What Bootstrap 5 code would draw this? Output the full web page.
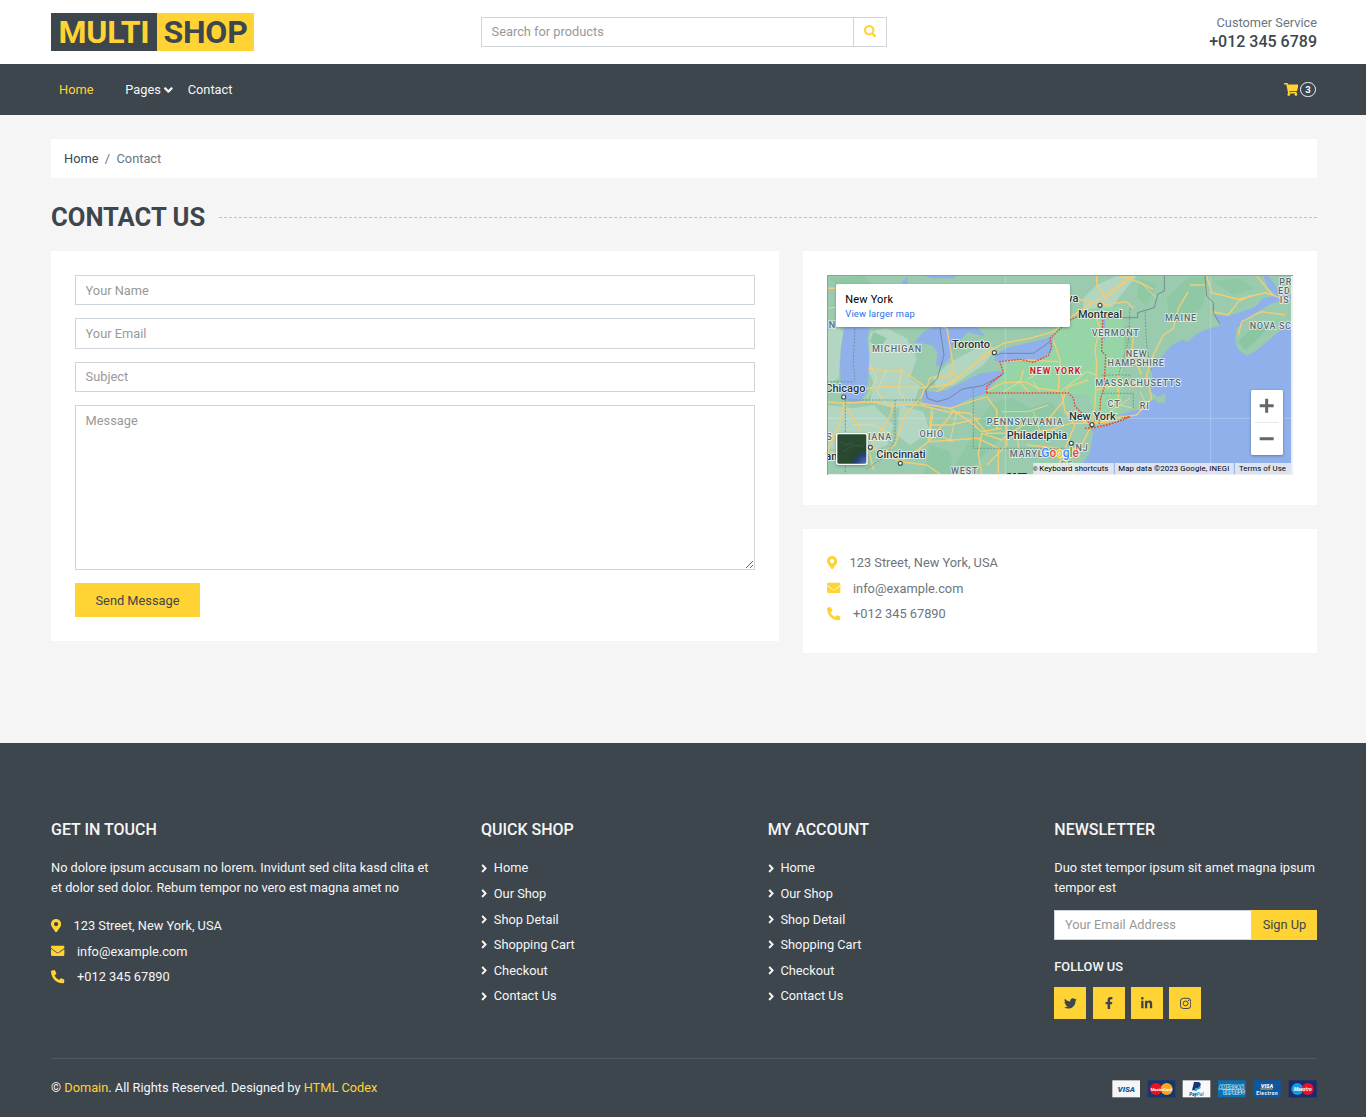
<!DOCTYPE html>
<html lang="en">
<head>
<meta charset="utf-8">
<meta name="viewport" content="width=device-width, initial-scale=1">
<title>MultiShop - Contact</title>
<link href="https://cdn.jsdelivr.net/npm/bootstrap@5.3.0/dist/css/bootstrap.min.css" rel="stylesheet">
<style>
html{font-size:12.8px;background:#fff}
body{width:1366px;font-family:Roboto,"Liberation Sans",sans-serif;font-size:12.8px;line-height:1.5;color:#6c757d;background:#f5f5f5;--gold:#ffd333;--ink:#3d464d}
a{text-decoration:none}
.row{--bs-gutter-x:24px}
.shell{padding-left:51px;padding-right:49px}
.ink-bg{background:var(--ink)}
.gold-bg{background:var(--gold)}
.ink{color:var(--ink)}
.gold{color:var(--gold)}
.pale{color:#f5f5f5}
.ico{height:1em;width:auto;fill:currentColor;display:inline-block;vertical-align:-.125em;flex:none}
.brand span{font-size:32px;line-height:38.4px;font-weight:700;display:block;text-align:center;white-space:nowrap;letter-spacing:-.2px}
.brand span:first-child{width:106px}
.brand span:last-child{width:97px}
.topbar{height:64px}
#tel{font-size:16px;line-height:19.2px;font-weight:500}
.form-control{border-radius:0;border:1px solid #ced4da;padding:4.8px 9.6px;font-size:12.8px;line-height:19.2px;height:30.4px;background:#fff}
.form-control::placeholder{color:#999;opacity:1}
.find-btn{border:1px solid #ced4da;border-left:0;width:33px;background:#fff;color:var(--gold);padding-bottom:2px}
.mainnav{height:51px;font-size:12.8px}
#menu{padding-left:8px}
#menu a:nth-child(1){margin-right:31.8px}
#menu a:nth-child(2){margin-right:15px}
#menu .ico{margin-left:0;height:14px}
.crumbs{height:39px;padding:0 13px;margin-top:24px}
.crumbs .sep{padding:0 6.4px}
.page-title{font-size:25.6px;line-height:30.8px;font-weight:700;margin:24px 0 18.2px}
.dashes{height:1px;margin-left:14px;background:repeating-linear-gradient(90deg,#c4c4c4 0 3px,transparent 3px 5px)}
.panel{background:#fff;padding:24px}
.stack{display:flex;flex-direction:column;gap:13px}
textarea.form-control{height:165px;min-height:165px;resize:vertical}
.gbtn{background:var(--gold);color:var(--ink);border:0;border-radius:0;font-size:12.8px;line-height:19.2px}
.lines>p{margin:0 0 6.4px;display:flex;align-items:center;line-height:19.2px}
.lines .ico{height:13.6px;margin-right:12.4px}
.mapbox{height:200px;width:466px;display:block;font-family:Roboto,sans-serif}
#colForm{flex:0 0 752px;max-width:752px}
#colInfo{flex:0 0 538px;max-width:538px}
#send{width:125px;height:34px}
#mapPanel{height:254px}
#infoPanel{height:124px;margin-top:24px}
footer{margin-top:90px;padding-top:77px;height:374px}
footer h5{font-size:16px;line-height:19.2px;font-weight:500;margin:0 0 19.2px;text-transform:uppercase}
footer h6{font-size:12.8px;line-height:15.4px;font-weight:500;margin:19.2px 0 12.4px}
.qlinks a{display:flex;align-items:center;margin-bottom:6.4px;line-height:19.2px;color:#f5f5f5}
.qlinks .ico{margin-right:6.4px}
.sq{width:32px;height:32px;margin-right:6.3px;display:flex;align-items:center;justify-content:center}
.fbottom{margin:0 49px 0 51px;border-top:1px solid rgba(255,255,255,.1);padding-top:19px}
.count{width:16px;height:15px;border:1px solid #f5f5f5;border-radius:8px;font-size:9.6px;font-weight:700;line-height:13px;text-align:center;margin:0 1px 0 2px}
#frow{height:238px}
#blurb{margin:0 -10px 19.2px 0;padding-right:32px}
#news{margin:0 -6px 12.8px 0}
#sign{width:65px;flex:none}
#pay{width:205px;height:18px;margin-top:2px;flex:none}
</style>
<script src="https://cdn.jsdelivr.net/npm/bootstrap@5.3.0/dist/js/bootstrap.bundle.min.js"></script>
</head>
<body>
<svg width="0" height="0" class="d-none" aria-hidden="true">
<symbol id="i-pin" viewBox="0 0 384 512"><path d="M172.268 501.67C26.97 291.031 0 269.413 0 192 0 85.961 85.961 0 192 0s192 85.961 192 192c0 77.413-26.97 99.031-172.268 309.67-9.535 13.774-29.93 13.773-39.464 0zM192 272c44.183 0 80-35.817 80-80s-35.817-80-80-80-80 35.817-80 80 35.817 80 80 80z"/></symbol>
<symbol id="i-mail" viewBox="0 0 512 512"><path d="M502.3 190.8c3.9-3.1 9.7-.2 9.7 4.7V400c0 26.5-21.5 48-48 48H48c-26.5 0-48-21.5-48-48V195.6c0-5 5.7-7.8 9.7-4.7 22.4 17.4 52.1 39.5 154.1 113.6 21.1 15.4 56.7 47.8 92.2 47.6 35.7.3 72-32.8 92.3-47.6 102-74.1 131.6-96.3 154-113.7zM256 320c23.2.4 56.6-29.2 73.4-41.4 132.7-96.3 142.8-104.7 173.4-128.7 5.8-4.5 9.2-11.5 9.2-18.9v-19c0-26.5-21.5-48-48-48H48c-26.5 0-48 21.5-48 48v19c0 7.4 3.4 14.3 9.2 18.9 30.6 23.9 40.7 32.4 173.4 128.7 16.8 12.2 50.2 41.8 73.4 41.4z"/></symbol>
<symbol id="i-phone" viewBox="0 0 512 512"><path d="M497.39 361.8l-112-48a24 24 0 0 0-28 6.9l-49.6 60.6A370.66 370.66 0 0 1 130.6 204.11l60.6-49.6a23.94 23.94 0 0 0 6.9-28l-48-112A24.16 24.16 0 0 0 122.6.61l-104 24A24 24 0 0 0 0 48c0 256.5 207.9 464 464 464a24 24 0 0 0 23.4-18.6l24-104a24.29 24.29 0 0 0-14.01-27.6z"/></symbol>
<symbol id="i-right" viewBox="0 0 256 512"><path d="M224.3 273l-136 136c-9.4 9.4-24.6 9.4-33.9 0l-22.6-22.6c-9.4-9.4-9.4-24.6 0-33.9l96.4-96.4-96.4-96.4c-9.4-9.4-9.4-24.6 0-33.9L54.3 103c9.4-9.4 24.6-9.4 33.9 0l136 136c9.5 9.4 9.5 24.6.1 34z"/></symbol>
</svg>

<header class="topbar bg-white shell">
  <div class="row h-100 align-items-center">
    <div class="col-4">
      <a href="#" class="brand d-flex"><span class="ink-bg gold">MULTI</span><span class="gold-bg ink">SHOP</span></a>
    </div>
    <div class="col-4 d-flex">
      <input class="form-control flex-fill w-auto" placeholder="Search for products">
      <div class="find-btn d-flex align-items-center justify-content-center"><svg class="ico" viewBox="0 0 512 512"><path d="M505 442.7L405.3 343c-4.5-4.5-10.6-7-17-7H372c27.6-35.3 44-79.7 44-128C416 93.1 322.9 0 208 0S0 93.1 0 208s93.1 208 208 208c48.3 0 92.7-16.4 128-44v16.3c0 6.4 2.5 12.5 7 17l99.7 99.7c9.4 9.4 24.6 9.4 33.9 0l28.3-28.3c9.4-9.4 9.4-24.6.1-34zM208 336c-70.7 0-128-57.2-128-128 0-70.7 57.2-128 128-128 70.7 0 128 57.2 128 128 0 70.7-57.2 128-128 128z"/></svg></div>
    </div>
    <div class="col-4 text-end">
      <p class="m-0">Customer Service</p>
      <h5 class="m-0 ink" id="tel">+012 345 6789</h5>
    </div>
  </div>
</header>

<nav class="mainnav ink-bg shell d-flex align-items-center justify-content-between pale">
  <div class="d-flex align-items-center" id="menu">
    <a href="#" class="gold">Home</a>
    <a href="#" class="pale d-flex align-items-center"><span class="me-1">Pages</span><svg class="ico" viewBox="0 0 320 512"><path d="M143 352.3L7 216.3c-9.4-9.4-9.4-24.6 0-33.9l22.6-22.6c9.4-9.4 24.6-9.4 33.9 0l96.4 96.4 96.4-96.4c9.4-9.4 24.6-9.4 33.9 0l22.6 22.6c9.4 9.4 9.4 24.6 0 33.9l-136 136c-9.2 9.4-24.4 9.4-33.8 0z"/></svg></a>
    <a href="#" class="pale">Contact</a>
  </div>
  <div class="d-flex align-items-center">
    <svg class="ico gold" viewBox="0 0 576 512"><path d="M528.12 301.319l47.273-208C578.806 78.301 567.391 64 551.99 64H159.208l-9.166-44.81C147.758 8.021 137.93 0 126.529 0H24C10.745 0 0 10.745 0 24v16c0 13.255 10.745 24 24 24h69.883l70.248 343.435C147.325 417.1 136 435.222 136 456c0 30.928 25.072 56 56 56s56-25.072 56-56c0-15.674-6.447-29.835-16.824-40h209.647C430.447 426.165 424 440.326 424 456c0 30.928 25.072 56 56 56s56-25.072 56-56c0-22.172-12.888-41.332-31.579-50.405l5.517-24.276c3.413-15.018-8.002-29.319-23.403-29.319H218.117l-6.545-32h293.145c11.206 0 20.92-7.754 23.403-18.681z"/></svg>
    <span class="count">3</span>
  </div>
</nav>

<main class="shell">
  <div class="crumbs bg-white d-flex align-items-center"><a href="#" class="ink">Home</a><span class="sep">/</span><span>Contact</span></div>
  <h2 class="page-title ink d-flex align-items-center">CONTACT US<span class="dashes flex-fill"></span></h2>
  <div class="row align-items-start">
    <div class="col-7" id="colForm">
      <form class="panel stack">
        <input class="form-control" placeholder="Your Name">
        <input class="form-control" placeholder="Your Email">
        <input class="form-control" placeholder="Subject">
        <textarea class="form-control" placeholder="Message"></textarea>
        <div class="d-flex"><button type="button" class="gbtn" id="send">Send Message</button></div>
      </form>
    </div>
    <div class="col-5" id="colInfo">
      <div class="panel" id="mapPanel">
<svg class="mapbox" viewBox="21 30 1398 600">
<defs>
<radialGradient id="sat" cx=".95" cy="1" r=".9"><stop offset="0" stop-color="#5675b8"/><stop offset=".35" stop-color="#26407a"/><stop offset=".5" stop-color="#27472f"/><stop offset="1" stop-color="#2b4a30"/></radialGradient>
<clipPath id="mc"><rect x="21" y="30" width="1392" height="597"/></clipPath>
<filter id="sh" x="-20%" y="-20%" width="140%" height="150%"><feDropShadow dx="0" dy="3" stdDeviation="4" flood-opacity=".3"/></filter>
</defs>
<rect x="21" y="30" width="1398" height="600" fill="#eee"/>
<g clip-path="url(#mc)">
<rect x="21" y="30" width="1392" height="597" fill="#9acbae"/>
<!-- farmland tints -->
<g fill="#b2d6c1">
<path d="M150 200l50-10 60 30 30 60-20 60 30 20-20 60-60 10-70-20 10-60-20-40z"/>
<path d="M380 300l50-30 60-30 40 10-40 50-90 60-50 10-10-30z"/>
<path d="M21 420l80 10 60-10 60 60-20 60-70 30-110-20z"/>
<path d="M240 420l70 20 20 60-60 40-40-30z"/>
<path d="M790 100l40-40 60-27h60l-50 60-40 60-70 0z"/>
<path d="M21 200l30-20 20 20-10 60-5 80-35 20z"/>
</g>
<g fill="#8fc8a4">
<path d="M480 460l40-50 60-10 50 30 60-20 40 40-80 50-100 10-50 50-50 60h-60l40-60z"/>
<path d="M870 200l60-20 10 60-30 90-50 10z"/><path d="M1040 100l60-60 60-7-10 90-50 40-50 10z"/>
<path d="M330 540l60 20 10 67h-90z"/><path d="M30 40l100-7 30 30-110 0z"/>
<path d="M160 200l40 20-20 30-30-20zM1180 50l80-10 40 30-60 20zM960 40l50 20-30 60-30-20z"/>
</g>
<!-- New York state -->
<path fill="#96d5a5" d="M500 384l50-56-10-38 60-10 40 10 50-25-5-45 60-55 70-35 93-5 5 100-5 180-15 72-50-20-30-40-10-28z"/>
<!-- lakes -->
<g fill="#8fb0ea">
<path d="M75 180l75 0-8 40 6 50-2 60-6 50-18 28-22 8-25-16-13-50-2-50 4-60z"/>
<path d="M310 200l35-16h125l25 30-50-12-45 38-8 35-27 30-17-5 4-40-17-20-50-8z"/>
<path d="M303 400l12-25q25 12 65 0l50-25 50-25 65-7 5 10-35 32-15 25-60 20-40 20-50 7-35-12z"/>
<path d="M535 265l25-17 60-13 80-20-8 45-32 28-60 2-50 5-30-10z"/>
<path d="M245 50l18-15v20l-10 6zM310 32h100l-10 8h-60zM848 160l8 0-2 70-6-20z"/>
</g>
<!-- Atlantic coast -->
<g transform="translate(705 0)">
<path fill="#8fb0ea" d="M60 630L80 598 104 565 115 500 100 492 130 488 225 458 180 452 235 437 262 432 285 410 300 402 308 415 330 412 332 385 308 396 285 378 292 350 290 310 320 275 350 240 382 225 400 230 420 210 450 195 500 180 475 150 520 152 560 140 600 125 625 100 665 90 640 70 625 33H720V630Z"/>
<path fill="#9acbae" d="M100 490l40-28 60-12 28 8-60 20-55 14z"/>
<path fill="#9acbae" d="M540 225l5-35 35-30 40-10 45-22 44-3v45l-49 40-60 50-25 12-25-17zM640 33l30 40 39 20V33z"/>
<path fill="#9acbae" d="M590 150l60-35 65-15v30l-65 30z"/>
<path fill="#8ac6a2" d="M550 230l40-40 60-20-30 40-50 45z"/>
</g>
<path d="M556 30v597M1172 30v597M21 460h1392" stroke="#fff" stroke-opacity=".35" stroke-width="2" fill="none"/>
<!-- highways -->
<g fill="none" stroke="#f0cd76" stroke-width="4.4" stroke-linejoin="round">
<path d="M21 410l50 5 75-5 80 10 75 0 80 20 70 5 50 60 110 0 80-10 60-20 60 0 60-5"/>
<path d="M21 70l60 0 40 30 60 30 60-10 60 40 80 30 20 120-20 30"/>
<path d="M145 310l60 10 40-5 70 50-10 30-50 55-30 90-60 40"/>
<path d="M140 370l60-5 120 3 60-10 60-40 60-55 50-28 80-15 70-20 60-50 50-30 90-60 40-40"/>
<path d="M350 380l50-30 60-50 60-40M320 368l10-30 80-10"/>
<path d="M71 415l-10 60-30 60-10 40M71 415l40 60 30 60 20 80M150 545l-60-10-69-20M150 545l90 45 60-40 25-20 10-100M150 545l60-90 10-35M325 530l150-10 60 30 0 75M240 590l80 10 40 27M325 530l60-70 15-25"/>
<path d="M300 415l90 15 60 40 35 30 60-10M390 430l110-35M545 290l10 0 70-5 90 5M500 395l30 40 0 60M610 313l-10 40 30 30M500 378l50-25 65-3 40 20 60 8"/>
<path d="M485 505l-10 60 10 62M485 505l60 20 70-50 60 0 50-60 20-50 60-20M725 380l10 60 30 40-30 70-30 77M735 440l80 40-30 60-60 30M700 225l20 60-5 95"/>
<path d="M815 480l10-60 5-120-5-50 15-60-10-30"/>
<path d="M840 120l40-40 60-47M840 120l80-10 20 20M860 100l-30-40 0-27M900 33l60 20 40 20M640 120l90-30 110 30"/>
<path d="M815 480l60-20 75-10 45-50-15-70 20-60 30-60 30-20 15-60 30-50M965 330l-30-70 5-50M895 330l0 70M830 375l60-15 80 5"/>
<path d="M1160 33l15 50 80 20 80-20 60 20M1175 140l50 10 30-40 40-20M1255 210l10-40 60-30 70 10M1310 33l50 60M1110 60h45"/>
<path d="M330 480l60 0 90-20M620 540l100 10 30 77M560 480l0 60-60 60M21 560l80 0 40-15"/>
</g>
<g fill="none" stroke="#f3d88e" stroke-width="2.6">
<path d="M21 130l80-10 60-60M150 300l20 40-30 60M200 318l-30 60 30 40M245 315l-10 60 20 30M100 480l60 0 60 30M340 440l-10 60 70 30M410 440l-20 90M545 440l80 0 60-20M640 440l20 60 60 10M590 500l10 80M620 345l25-15M660 380l-20-30M960 50l50 50M960 380l20 40M900 420l40 10M870 440l60-40M720 380l80-60 30 10M600 350l-50 30"/>
</g>
<!-- borders -->
<g fill="none" stroke="#6f8f86" stroke-width="2.5" stroke-dasharray="6 4">
<path d="M105 190l-5 100 5 60M21 350h82M76 405v222M76 405h225M225 405v120l-30 50-60 40M460 370v180h280M845 330h90M850 385h90v50M975 140l5 100 15 80M930 130l-5 100-30 100"/>
</g>
<g fill="none" stroke="#6d7f8a" stroke-width="2.5">
<path d="M360 190l12 80-20 70-35 35 5 25 30 10 35-10 40-28 60-10 60-32M530 270l15-5h95l50-35M848 158h105v-15l50-15 10-40 20-10v-45M1155 33l5 60 20 20 0 30 20 35"/>
</g>
<path fill="none" stroke="#ea4335" stroke-width="4" stroke-dasharray="5 4" d="M500 384h245l15 15 5 25 30 30 20 35M500 384v-20l50-40-10-34 60-7 40 9 45-20 10-25-5-27 60-55 45-20M848 165l-3 95 12 10-5 100-10 30-5 80M805 490l60-10 65-25M795 490l30-2 70-18 35-14-25 2"/>
<!-- place names -->
<g text-anchor="middle">
<g font-size="27" font-weight="500" fill="#5a6872" stroke="#fff" stroke-opacity=".75" stroke-width="5" paint-order="stroke" letter-spacing="2.4">
<text x="231" y="260">MICHIGAN</text><text x="335" y="517">OHIO</text><text x="180" y="525">IANA</text><text x="37" y="190">N</text><text x="28" y="525">S</text>
<text x="616" y="479" letter-spacing="3">PENNSYLVANIA</text><text x="620" y="575">MARYL</text><text x="434" y="626">WEST</text>
<text x="887" y="214">VERMONT</text><text x="1083" y="169">MAINE</text><text x="950" y="277">NEW</text><text x="948" y="303" letter-spacing="1.9">HAMPSHIRE</text><text x="955" y="363" letter-spacing="2.4">MASSACHUSETTS</text>
<text x="882" y="427">CT</text><text x="974" y="433">RI</text><text x="786" y="558">NJ</text><text x="741" y="608" opacity=".5">DE</text><text x="1352" y="191" letter-spacing="1.8">NOVA SC</text>
<text x="1397" y="61">PR</text><text x="1393" y="88">ED</text><text x="1394" y="115">IS</text>
</g>
<text x="705" y="327" font-size="26" font-weight="700" fill="#c5221f" stroke="#fff" stroke-opacity=".8" stroke-width="5" paint-order="stroke" textLength="152">NEW YORK</text>
<g font-size="33" font-weight="500" fill="#27323c" stroke="#fff" stroke-opacity=".8" stroke-width="5" paint-order="stroke">
<text x="453" y="249">Toronto</text><text x="76" y="381">Chicago</text><text x="243" y="580">Cincinnati</text><text x="840" y="159">Montreal</text><text x="817" y="465">New York</text><text x="651" y="521">Philadelphia</text><text x="754" y="111">wa</text><text x="34" y="584">an</text>
</g>
</g>
<path d="M562 626h12M580 626h8M594 626h26" stroke="#27323c" stroke-width="4"/>
<g fill="#fff" stroke="#3c4a54" stroke-width="3.5"><circle cx="523" cy="263" r="6"/><circle cx="71" cy="396" r="6"/><circle cx="151" cy="547" r="6"/><circle cx="241" cy="595" r="6"/><circle cx="840" cy="121" r="6"/><circle cx="816" cy="479" r="6"/><circle cx="754" cy="535" r="6"/></g>
<!-- Google wordmark -->
<text x="664" y="576" font-size="36" font-weight="500" stroke="#fff" stroke-width="4" paint-order="stroke" textLength="113"><tspan fill="#4285f4">G</tspan><tspan fill="#ea4335">o</tspan><tspan fill="#fbbc05">o</tspan><tspan fill="#4285f4">g</tspan><tspan fill="#34a853">l</tspan><tspan fill="#ea4335">e</tspan></text>
<!-- satellite toggle -->
<rect x="50" y="506" width="91" height="92" rx="6" fill="url(#sat)" stroke="#fff" stroke-width="4" filter="url(#sh)"/>
<path d="M60 530l20 10 20-8M70 560l30-20 30 4" stroke="#3c5a40" stroke-width="3" fill="none"/>
<!-- zoom control -->
<rect x="1293" y="375" width="96" height="195" rx="5" fill="#fff" filter="url(#sh)"/>
<path d="M1305 472h72" stroke="#e6e6e6" stroke-width="3"/>
<path d="M1319 422h42M1340 401v42M1319 521h42" stroke="#666" stroke-width="9"/>
<!-- attribution -->
<rect x="640" y="594" width="773" height="33" fill="#f5f5f5" fill-opacity=".75"/>
<path d="M883 594v33M1243 594v33" stroke="#8fb0ea" stroke-width="3"/>
<g font-size="23.5" fill="#000"><text x="639" y="618" font-size="18">©</text><text x="658" y="618" textLength="207">Keyboard shortcuts</text><text x="895" y="618" textLength="333">Map data ©2023 Google, INEGI</text><text x="1257" y="618" textLength="141">Terms of Use</text></g>
<!-- info card -->
<rect x="48" y="57" width="702" height="129" rx="5" fill="#fff" filter="url(#sh)"/>
<text x="76" y="113" font-size="33" fill="#000" textLength="143">New York</text>
<text x="76" y="155" font-size="28" fill="#1a73e8" textLength="208">View larger map</text>
</g>
<path d="M22.5 630V31.5H1419" stroke="#9a9a9a" stroke-width="3" fill="none"/>
</svg>
      </div>
      <div class="panel lines" id="infoPanel">
        <p><svg class="ico gold" viewBox="0 0 384 512"><use href="#i-pin"/></svg>123 Street, New York, USA</p>
        <p><svg class="ico gold" viewBox="0 0 512 512"><use href="#i-mail"/></svg>info@example.com</p>
        <p><svg class="ico gold" viewBox="0 0 512 512"><use href="#i-phone"/></svg>+012 345 67890</p>
      </div>
    </div>
  </div>
</main>

<footer class="ink-bg pale">
  <div class="shell">
    <div class="row" id="frow">
      <div class="col-4">
        <h5>Get In Touch</h5>
        <p id="blurb">No dolore ipsum accusam no lorem. Invidunt sed clita kasd clita et et dolor sed dolor. Rebum tempor no vero est magna amet no</p>
        <div class="lines">
          <p><svg class="ico gold" viewBox="0 0 384 512"><use href="#i-pin"/></svg>123 Street, New York, USA</p>
          <p><svg class="ico gold" viewBox="0 0 512 512"><use href="#i-mail"/></svg>info@example.com</p>
          <p><svg class="ico gold" viewBox="0 0 512 512"><use href="#i-phone"/></svg>+012 345 67890</p>
        </div>
      </div>
      <div class="col-8">
        <div class="row">
          <div class="col-4 qlinks">
            <h5>Quick Shop</h5>
            <a href="#"><svg class="ico" viewBox="0 0 256 512"><use href="#i-right"/></svg>Home</a>
            <a href="#"><svg class="ico" viewBox="0 0 256 512"><use href="#i-right"/></svg>Our Shop</a>
            <a href="#"><svg class="ico" viewBox="0 0 256 512"><use href="#i-right"/></svg>Shop Detail</a>
            <a href="#"><svg class="ico" viewBox="0 0 256 512"><use href="#i-right"/></svg>Shopping Cart</a>
            <a href="#"><svg class="ico" viewBox="0 0 256 512"><use href="#i-right"/></svg>Checkout</a>
            <a href="#"><svg class="ico" viewBox="0 0 256 512"><use href="#i-right"/></svg>Contact Us</a>
          </div>
          <div class="col-4 qlinks">
            <h5>My Account</h5>
            <a href="#"><svg class="ico" viewBox="0 0 256 512"><use href="#i-right"/></svg>Home</a>
            <a href="#"><svg class="ico" viewBox="0 0 256 512"><use href="#i-right"/></svg>Our Shop</a>
            <a href="#"><svg class="ico" viewBox="0 0 256 512"><use href="#i-right"/></svg>Shop Detail</a>
            <a href="#"><svg class="ico" viewBox="0 0 256 512"><use href="#i-right"/></svg>Shopping Cart</a>
            <a href="#"><svg class="ico" viewBox="0 0 256 512"><use href="#i-right"/></svg>Checkout</a>
            <a href="#"><svg class="ico" viewBox="0 0 256 512"><use href="#i-right"/></svg>Contact Us</a>
          </div>
          <div class="col-4">
            <h5>Newsletter</h5>
            <p id="news">Duo stet tempor ipsum sit amet magna ipsum tempor est</p>
            <div class="d-flex"><input class="form-control flex-fill w-auto" size="1" placeholder="Your Email Address"><button type="button" class="gbtn" id="sign">Sign Up</button></div>
            <h6>FOLLOW US</h6>
            <div class="d-flex ink">
              <a href="#" class="sq gold-bg ink"><svg class="ico" viewBox="0 0 512 512"><path d="M459.37 151.716c.325 4.548.325 9.097.325 13.645 0 138.72-105.583 298.558-298.558 298.558-59.452 0-114.68-17.219-161.137-47.106 8.447.974 16.568 1.299 25.34 1.299 49.055 0 94.213-16.568 130.274-44.832-46.132-.975-84.792-31.188-98.112-72.772 6.498.974 12.995 1.624 19.818 1.624 9.421 0 18.843-1.3 27.614-3.573-48.081-9.747-84.143-51.98-84.143-102.985v-1.299c13.969 7.797 30.214 12.67 47.431 13.319-28.264-18.843-46.781-51.005-46.781-87.391 0-19.492 5.197-37.36 14.294-52.954 51.655 63.675 129.3 105.258 216.365 109.807-1.624-7.797-2.599-15.918-2.599-24.04 0-57.828 46.782-104.934 104.934-104.934 30.213 0 57.502 12.67 76.67 33.137 23.715-4.548 46.456-13.32 66.599-25.34-7.798 24.366-24.366 44.833-46.132 57.827 21.117-2.273 41.584-8.122 60.426-16.243-14.292 20.791-32.161 39.308-52.628 54.253z"/></svg></a>
              <a href="#" class="sq gold-bg ink"><svg class="ico" viewBox="0 0 320 512"><path d="M279.14 288l14.22-92.66h-88.91v-60.13c0-25.35 12.42-50.06 52.24-50.06h40.42V6.26S260.43 0 225.36 0c-73.22 0-121.08 44.38-121.08 124.72v70.62H22.89V288h81.39v224h100.17V288z"/></svg></a>
              <a href="#" class="sq gold-bg ink"><svg class="ico" viewBox="0 0 448 512"><path d="M100.28 448H7.4V148.9h92.88zM53.79 108.1C24.09 108.1 0 83.5 0 53.8a53.79 53.79 0 0 1 107.58 0c0 29.7-24.1 54.3-53.79 54.3zM447.9 448h-92.68V302.4c0-34.7-.7-79.2-48.29-79.2-48.29 0-55.69 37.7-55.69 76.7V448h-92.78V148.9h89.08v40.8h1.3c12.4-23.5 42.69-48.3 87.88-48.3 94 0 111.28 61.9 111.28 142.3V448z"/></svg></a>
              <a href="#" class="sq gold-bg ink"><svg class="ico" viewBox="0 0 448 512"><g fill="none" stroke="currentColor" stroke-width="40"><rect x="20" y="52" width="408" height="408" rx="112"/><circle cx="224" cy="256" r="95"/></g><circle cx="343" cy="137" r="27"/></svg></a>
            </div>
          </div>
        </div>
      </div>
    </div>
  </div>
  <div class="fbottom d-flex justify-content-between">
    <p class="m-0">© <a href="#" class="gold">Domain</a>. All Rights Reserved. Designed by <a href="#" class="gold">HTML Codex</a></p>
    <svg id="pay" viewBox="217 809 615 54" font-family="Roboto,sans-serif" text-anchor="middle">
      <rect x="218" y="810" width="83" height="51" fill="#f4f5f7"/><text x="260" y="844" font-size="24" font-weight="900" font-style="italic" fill="#1a5a9c">VISA</text>
      <rect x="324" y="810" width="83" height="51" fill="#16366f"/><circle cx="349" cy="836" r="18" fill="#f0121c"/><circle cx="381" cy="836" r="18" fill="#fba61c"/><text x="365" y="841" font-size="13" font-weight="700" fill="#fff" textLength="64">MasterCard</text>
      <rect x="429" y="810" width="83" height="51" fill="#f8f8f8"/><path d="M463 815h14q9 3 5 12-4 8-14 7l-2 6h-9z" fill="#17377c"/><path d="M470 834q10 0 12-6 4 8-10 10l-2 5h-6z" fill="#1d96d6"/><text x="470" y="856" font-size="14" font-weight="900" font-style="italic" fill="#1b4d96">Pay<tspan fill="#25a0dc">Pal</tspan></text>
      <rect x="535" y="810" width="83" height="51" fill="#0871b0"/><g font-size="14" font-weight="900" fill="#0871b0" stroke="#cfe7f3" stroke-width="2.5" paint-order="stroke"><text x="575" y="835" textLength="74">AMERICAN</text><text x="583" y="851" textLength="64">EXPRESS</text></g>
      <rect x="641" y="810" width="82" height="51" fill="#0b57a0"/><text x="682" y="832" font-size="17" font-weight="900" font-style="italic" fill="#fff">VISA</text><path d="M662 836h37" stroke="#f0b63a" stroke-width="3"/><text x="682" y="854" font-size="14" font-weight="700" fill="#fff" textLength="64">Electron</text>
      <rect x="747" y="810" width="84" height="51" fill="#1b2a6b"/><circle cx="773" cy="836" r="18" fill="#159ade"/><circle cx="804" cy="836" r="18" fill="#e8102c"/><text x="789" y="841" font-size="15" font-weight="700" font-style="italic" fill="#fff">Maestro</text>
    </svg>
  </div>
</footer>
</body>
</html>
